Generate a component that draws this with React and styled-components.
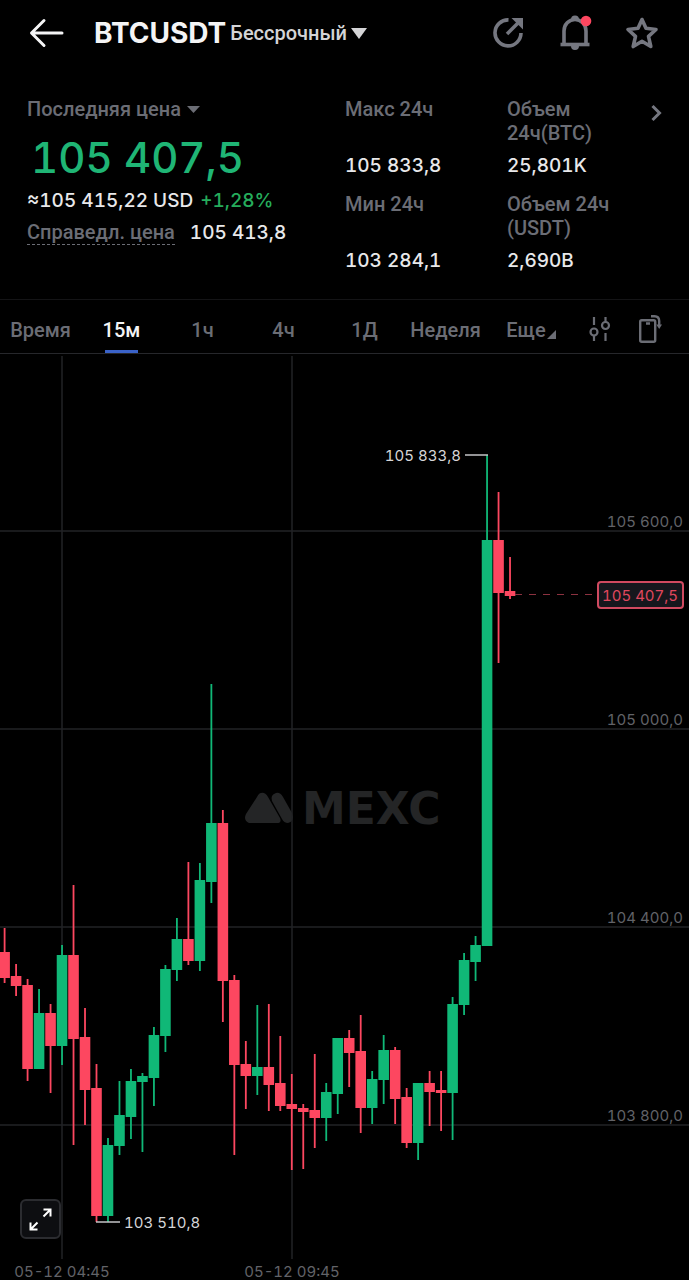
import React from "react";
import styled, { createGlobalStyle } from "styled-components";

const GlobalStyle = createGlobalStyle`
  * {
    box-sizing: border-box;
  }
  body {
    margin: 0;
    background: #000;
    color: #e8e8ea;
    font-family: Roboto, "Noto Sans", sans-serif;
    font-weight: 500;
    font-variant-numeric: tabular-nums;
  }
  button {
    padding: 0;
    border: 0;
    background: none;
    color: inherit;
    font: inherit;
    font-variant-numeric: tabular-nums;
    cursor: pointer;
  }
  svg {
    display: block;
  }
`;

const Page = styled.main`
  background: #000;
`;

const Header = styled.header`
  display: flex;
  align-items: center;
  height: 66px;
  padding: 0 30px 0 28px;
`;

const BackButton = styled.button`
  margin-right: 28px;
`;

const PairButton = styled.button`
  display: flex;
  align-items: center;
  gap: 4px;
  color: #d4d4d6;
  font-size: 20px;
  line-height: 32px;
`;

const Pair = styled.h1`
  margin: 0;
  color: #f4f4f5;
  font-family: Inter, sans-serif;
  font-size: 28px;
  font-weight: 700;
`;

const HeaderActions = styled.div`
  display: flex;
  align-items: center;
  gap: 33px;
  margin-left: auto;
  color: #757780;
`;

const Summary = styled.section`
  display: grid;
  grid-template-columns: 318fr 162fr 135fr 20px;
  padding: 31px 27px 26px;
  border-bottom: 1px solid #141416;
`;

const Column = styled.div`
  display: flex;
  flex-direction: column;
  align-items: flex-start;
`;

const PriceSelect = styled.button`
  display: flex;
  align-items: center;
  gap: 6px;
  color: #6b6d75;
  font-size: 20px;
  line-height: 24px;
`;

const LastPrice = styled.div`
  margin: 13px 0 7px;
  padding-left: 4px;
  color: #1fb575;
  font-family: Inter, sans-serif;
  font-size: 42px;
  line-height: 48px;
`;

const PriceLine = styled.div`
  display: flex;
  align-items: baseline;
  gap: ${props => props.$gap}px;
  margin-bottom: 8px;
  font-family: Inter, sans-serif;
  font-size: 19px;
  line-height: 24px;
`;

const Change = styled.span`
  color: #25ac5c;
`;

const FairLabel = styled.span`
  border-bottom: 1px dashed #6b6d75;
  color: #6b6d75;
  font-family: Roboto, sans-serif;
  font-size: 20px;
  line-height: 23px;
`;

const Stats = styled.dl`
  display: flex;
  flex-direction: column;
  gap: 14px;
  margin: 0;
  line-height: 24px;
`;

const StatLabel = styled.dt`
  height: 48px;
  margin-bottom: 9px;
  color: #6b6d75;
  font-size: 20px;
  white-space: pre-line;
`;

const StatValue = styled.dd`
  margin: 0;
  font-family: Inter, sans-serif;
  font-size: 19px;
`;

const MoreButton = styled.button`
  display: flex;
  justify-content: flex-end;
  align-self: start;
  padding-top: 7px;
  color: #757780;
`;

const Intervals = styled.nav`
  display: grid;
  grid-template-columns: repeat(6, 81fr) 90fr 48fr 51fr;
  height: 54px;
  padding-right: 14px;
  border-bottom: 1px solid #26272b;
`;

const Interval = styled.button`
  position: relative;
  display: flex;
  align-items: center;
  justify-content: center;
  padding-bottom: 7px;
  padding-top: 14px;
  color: ${props => (props.$active ? "#f4f4f5" : "#6b6d75")};
  font-size: 20px;
  line-height: 24px;
  &::after {
    content: "";
    position: absolute;
    bottom: 0;
    width: 33px;
    height: 3px;
    background: ${props => (props.$active ? "#3a62c8" : "transparent")};
  }
`;

const IconInterval = styled(Interval)`
  padding-bottom: 8px;
  padding-top: 12px;
`;

const ChartArea = styled.section`
  position: relative;
`;

const Plot = styled.svg`
  width: 100%;
  height: auto;
  font-family: Inter, sans-serif;
  font-size: 15px;
  font-weight: 400;
`;

const ExpandButton = styled.button`
  position: absolute;
  left: 20px;
  bottom: 41px;
  display: grid;
  place-items: center;
  width: 41px;
  height: 40px;
  border: 2px solid #2b2c30;
  border-radius: 6px;
  background: #0d0e11;
  color: #fff;
`;

const UP = "#10b877";
const DOWN = "#fd4760";

// high, body top, body bottom, low, rising
const candles = [
  [928, 952, 978, 983, 0],
  [964, 976, 986, 996, 0],
  [979, 985, 1069, 1081, 0],
  [989, 1013, 1069, 1069, 1],
  [1004, 1013, 1046, 1093, 0],
  [945, 955, 1046, 1065, 1],
  [885, 955, 1039, 1145, 0],
  [1008, 1037, 1090, 1125, 0],
  [1064, 1088, 1216, 1222, 0],
  [1138, 1145, 1216, 1222, 1],
  [1081, 1115, 1146, 1155, 1],
  [1069, 1081, 1117, 1139, 1],
  [1073, 1076, 1082, 1152, 1],
  [1027, 1035, 1078, 1106, 1],
  [965, 969, 1036, 1052, 1],
  [918, 939, 970, 981, 1],
  [862, 939, 961, 965, 0],
  [863, 880, 961, 971, 1],
  [684, 823, 882, 903, 1],
  [810, 823, 981, 1022, 0],
  [975, 980, 1065, 1155, 0],
  [1041, 1064, 1076, 1109, 0],
  [1005, 1067, 1076, 1095, 1],
  [1004, 1067, 1085, 1111, 0],
  [1036, 1083, 1106, 1111, 0],
  [1074, 1104, 1109, 1170, 0],
  [1104, 1108, 1112, 1169, 0],
  [1054, 1110, 1118, 1148, 0],
  [1083, 1092, 1118, 1141, 1],
  [1038, 1038, 1094, 1114, 1],
  [1030, 1038, 1053, 1087, 0],
  [1015, 1051, 1108, 1133, 0],
  [1071, 1079, 1108, 1124, 1],
  [1035, 1050, 1080, 1104, 1],
  [1047, 1050, 1099, 1124, 0],
  [1088, 1097, 1143, 1148, 0],
  [1083, 1083, 1143, 1160, 1],
  [1071, 1083, 1092, 1126, 0],
  [1071, 1090, 1093, 1131, 0],
  [997, 1004, 1093, 1140, 1],
  [953, 960, 1005, 1015, 1],
  [936, 945, 962, 981, 1],
  [455, 540, 946, 946, 1],
  [492, 540, 593, 663, 0],
  [557, 591, 596, 599, 0]
];

const priceLevels = [
  { y: 531, label: "105 600,0" },
  { y: 729, label: "105 000,0" },
  { y: 927, label: "104 400,0" },
  { y: 1125, label: "103 800,0" }
];

const timeMarks = [
  { x: 62, label: "05-12 04:45" },
  { x: 292, label: "05-12 09:45" }
];

const intervals = ["Время", "15м", "1ч", "4ч", "1Д", "Неделя"];

const highLow = [
  { label: "Макс 24ч", value: "105 833,8" },
  { label: "Мин 24ч", value: "103 284,1" }
];

const volumes = [
  { label: "Объем\n24ч(BTC)", value: "25,801K" },
  { label: "Объем 24ч\n(USDT)", value: "2,690B" }
];

const BackIcon = () => (
  <svg width="38" height="32" viewBox="0 0 38 32" fill="none" stroke="#f4f4f5" strokeWidth="3" strokeLinecap="round" strokeLinejoin="round">
    <path d="M34 16H4M16 3.500L3.500 16L16 28.500" />
  </svg>
);

const CaretIcon = ({ width, height }) => (
  <svg width={width} height={height} viewBox="0 0 16 11" preserveAspectRatio="none" fill="currentColor">
    <path d="M0 0H16L8 11Z" />
  </svg>
);

const ShareIcon = () => (
  <svg width="34" height="34" viewBox="0 0 34 34" fill="none" stroke="currentColor" strokeWidth="3.600">
    <path d="M17.500 3.900A13 13 0 1 0 30 17" />
    <path d="M16 18L28 6" />
    <path d="M20.500 2H32V13.500Z" fill="currentColor" stroke="none" />
  </svg>
);

const BellIcon = () => (
  <svg width="34" height="36" viewBox="0 0 34 36" fill="none" stroke="currentColor" strokeWidth="3.600">
    <path d="M6 29V16A11 11.500 0 0 1 28 16V29" />
    <path d="M2.500 29.500H31.500" />
    <path d="M13 4.500A4 4 0 0 1 21 4.500ZM13 31H21A4 4 0 0 1 13 31Z" fill="currentColor" stroke="none" />
    <circle cx="28" cy="6" r="5.300" fill={DOWN} stroke="none" />
  </svg>
);

const StarIcon = () => (
  <svg width="34" height="34" viewBox="0 0 34 34" fill="none" stroke="currentColor" strokeWidth="3.600" strokeLinejoin="round">
    <path d="M17 3.500L21 12.300L31 13.500L23.500 20.300L25.800 30.500L17 25.300L8.200 30.500L10.500 20.300L3 13.500L13 12.300Z" />
  </svg>
);

const ChevronIcon = () => (
  <svg width="11" height="18" viewBox="0 0 11 18" fill="none" stroke="currentColor" strokeWidth="3">
    <path d="M1.500 2L8.500 9L1.500 16" />
  </svg>
);

const CornerIcon = () => (
  <svg width="10" height="24" viewBox="0 0 10 24" fill="currentColor">
    <path d="M10 12V21H1Z" />
  </svg>
);

const SettingsIcon = () => (
  <svg width="22" height="26" viewBox="0 0 22 26" fill="none" stroke="currentColor" strokeWidth="2.200">
    <circle cx="5" cy="16" r="3.500" />
    <circle cx="16.500" cy="9.500" r="3.500" />
    <path d="M5 1V9M5 19.500V25M16.500 1V6M16.500 17V25" />
  </svg>
);

const RotateIcon = () => (
  <svg width="24" height="30" viewBox="0 0 24 30" fill="none" stroke="currentColor" strokeWidth="2.400">
    <rect x="2.200" y="6.200" width="15" height="21.600" rx="1.500" />
    <path d="M8 9.500H12M13 2.200H16.500Q21.200 2.200 21.200 7V11" />
    <path d="M18.300 10.500H24L21.200 15Z" fill="currentColor" stroke="none" />
  </svg>
);

const ExpandIcon = () => (
  <svg width="25" height="25" viewBox="0 0 25 25" fill="none" stroke="currentColor" strokeWidth="2">
    <path d="M15.500 9.500L22.500 2.500M15.500 2.500H22.500V9.500M9.500 15.500L2.500 22.500M2.500 15.500V22.500H9.500" />
  </svg>
);

const Watermark = () => (
  <g fill="#242526">
    <path d="M261 793Q265 792 268 797L280 818Q282 823 277 823H249Q243 820 246 814L257 797Q259 793 261 793Z" />
    <path d="M276 793Q280 792 283 797L292 813Q295 821 288 823Q284 823 282 819L272 801Q270 795 276 793Z" />
    <text x="302" y="824" fontFamily="DejaVu Sans" fontSize="44" fontWeight="700">
      MEXC
    </text>
  </g>
);

const Candle = ({ index, candle }) => {
  const [high, top, bottom, low, rising] = candle;
  const x = 4.6 + index * 11.487;
  return (
    <g fill={rising ? UP : DOWN}>
      <rect x={x - 0.9} y={high} width="1.8" height={low - high} />
      <rect x={x - 5.3} y={top} width="10.6" height={bottom - top} />
    </g>
  );
};

const Chart = () => (
  <Plot viewBox="0 354 689 926" role="img" aria-label="BTCUSDT 15м">
    <Watermark />
    <g stroke="#222326" strokeWidth="1.500">
      {priceLevels.map(level => (
        <path key={level.y} d={`M0 ${level.y}H689`} />
      ))}
      {timeMarks.map(mark => (
        <path key={mark.x} d={`M${mark.x} 356V1259`} />
      ))}
    </g>
    {candles.map((candle, index) => (
      <Candle key={index} index={index} candle={candle} />
    ))}
    <g fill="#626368">
      {priceLevels.map(level => (
        <text key={level.y} x="683" y={level.y - 4} textAnchor="end">
          {level.label}
        </text>
      ))}
      {timeMarks.map(mark => (
        <text key={mark.x} x={mark.x} y="1277" textAnchor="middle">
          {mark.label}
        </text>
      ))}
    </g>
    <g fill="#d6d6d8">
      <text x="461" y="461" textAnchor="end">
        105 833,8
      </text>
      <text x="124" y="1228">
        103 510,8
      </text>
    </g>
    <path d="M465 455H488M96 1222H120" stroke="#c4c4c6" strokeWidth="1.500" />
    <path d="M515 594.500H593" stroke="#8c3240" strokeWidth="1.200" strokeDasharray="7 7" />
    <rect x="598" y="582" width="85" height="26" rx="3" fill="#16171d" stroke="#d04a60" strokeWidth="2" />
    <text x="640" y="601" textAnchor="middle" fill="#e0475e">
      105 407,5
    </text>
  </Plot>
);

const StatColumn = ({ items }) => (
  <Stats>
    {items.map(item => (
      <div key={item.value}>
        <StatLabel>{item.label}</StatLabel>
        <StatValue>{item.value}</StatValue>
      </div>
    ))}
  </Stats>
);

const App = () => {
  return (
    <Page>
      <GlobalStyle />
      <Header>
        <BackButton aria-label="Назад">
          <BackIcon />
        </BackButton>
        <PairButton>
          <Pair>BTCUSDT</Pair>
          Бессрочный
          <CaretIcon width={16} height={11} />
        </PairButton>
        <HeaderActions>
          <button aria-label="Поделиться">
            <ShareIcon />
          </button>
          <button aria-label="Уведомления">
            <BellIcon />
          </button>
          <button aria-label="Избранное">
            <StarIcon />
          </button>
        </HeaderActions>
      </Header>
      <Summary>
        <Column>
          <PriceSelect>
            Последняя цена
            <CaretIcon width={13} height={7} />
          </PriceSelect>
          <LastPrice>105 407,5</LastPrice>
          <PriceLine $gap={7}>
            <span>≈105 415,22 USD</span>
            <Change>+1,28%</Change>
          </PriceLine>
          <PriceLine $gap={15}>
            <FairLabel>Справедл. цена</FairLabel>
            <span>105 413,8</span>
          </PriceLine>
        </Column>
        <StatColumn items={highLow} />
        <StatColumn items={volumes} />
        <MoreButton aria-label="Подробнее">
          <ChevronIcon />
        </MoreButton>
      </Summary>
      <Intervals>
        {intervals.map(name => (
          <Interval key={name} $active={name === "15м"}>
            {name}
          </Interval>
        ))}
        <Interval>
          Еще
          <CornerIcon />
        </Interval>
        <IconInterval aria-label="Индикаторы">
          <SettingsIcon />
        </IconInterval>
        <IconInterval aria-label="Повернуть экран">
          <RotateIcon />
        </IconInterval>
      </Intervals>
      <ChartArea>
        <Chart />
        <ExpandButton aria-label="На весь экран">
          <ExpandIcon />
        </ExpandButton>
      </ChartArea>
    </Page>
  );
};

export default App;
